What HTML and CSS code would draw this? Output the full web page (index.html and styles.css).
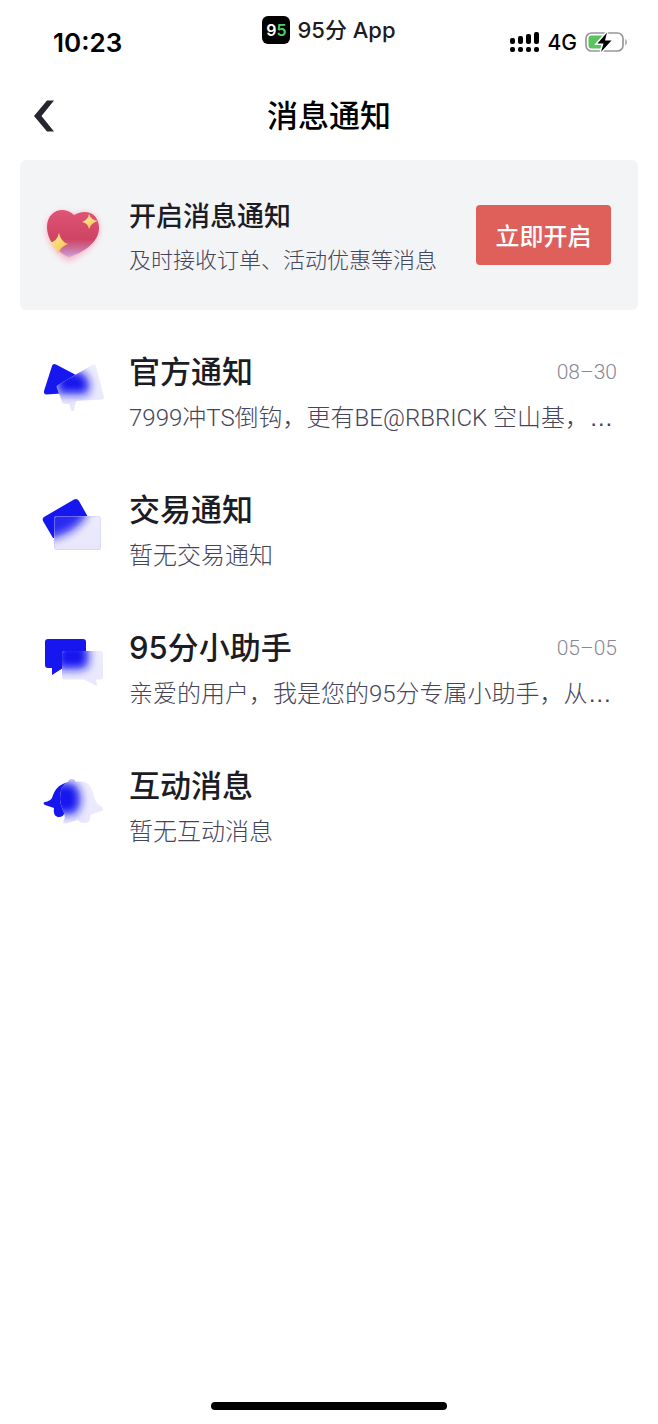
FILE: index.html
```html
<!DOCTYPE html>
<html lang="zh-CN">
  <head>
    <meta charset="UTF-8" />
    <meta name="viewport" content="width=device-width, initial-scale=1.0" />
    <title>消息通知</title>
    <link rel="stylesheet" href="styles.css">
  </head>
  <body>
    <div class="status">
      <div class="time">10:23</div>
      <div class="app">
        <span class="logo">9<i>5</i></span>
        <span>95分 App</span>
      </div>
      <div class="signals">
        <svg width="31" height="22" viewBox="0 0 31 22">
          <rect x="1" y="7" width="5" height="6" rx="2" />
          <rect x="9" y="5" width="5" height="8" rx="2" />
          <rect x="17" y="3" width="5" height="10" rx="2" />
          <rect x="25" y="1" width="5" height="12" rx="2" />
          <rect x="1" y="16" width="5" height="5" rx="2" />
          <rect x="9" y="16" width="5" height="5" rx="2" />
          <rect x="17" y="16" width="5" height="5" rx="2" />
          <rect x="25" y="16" width="5" height="5" rx="2" />
        </svg>
        <span>4G</span>
        <svg width="43" height="22" viewBox="0 0 43 22">
          <rect x="1" y="2" width="37" height="18" rx="5.5" fill="#fff" stroke="#98989b" stroke-width="1.7" />
          <path d="M40.3 8v6.4c2-1 2-5.400 0-6.400z" fill="#98989b" />
          <path d="M6.500 4.500H19v13H6.500a3 3 0 0 1-3-3v-7a3 3 0 0 1 3-3z" fill="#5bc45f" />
          <path d="M22 1.500L12.500 12.500h6L16 21l10.500-11.500h-6.500z" fill="#000" stroke="#fff" stroke-width="3" paint-order="stroke" />
        </svg>
      </div>
    </div>

    <header class="nav">
      <button class="back" aria-label="返回">
        <svg width="20" height="32" viewBox="0 0 20 32">
          <path d="M13 .5h7L7.500 16 20 31.500h-7L0 16z" fill="#26262f" />
        </svg>
      </button>
      <h1>消息通知</h1>
    </header>

    <section class="banner">
      <svg class="icon" viewBox="0 0 62 62">
        <defs>
          <linearGradient id="heart" x1="0" y1="0" x2="0" y2="1">
            <stop offset="0" stop-color="#df5575" />
            <stop offset=".62" stop-color="#cf4363" />
            <stop offset=".82" stop-color="#cc6f9b" />
            <stop offset="1" stop-color="#cfa0d8" />
          </linearGradient>
          <linearGradient id="star" x1="0" y1="0" x2="1" y2="1">
            <stop offset="0" stop-color="#ffef9a" />
            <stop offset="1" stop-color="#f3c04f" />
          </linearGradient>
          <filter id="glow" x="-30%" y="-30%" width="160%" height="160%">
            <feGaussianBlur stdDeviation="3" />
          </filter>
          <filter id="soft"><feGaussianBlur stdDeviation=".5" /></filter>
        </defs>
        <path d="M26 57C18 54 4 41 4 25C4 10 20 3 31 12C43 4 56 12 56 24C56 42 36 52 26 57z" fill="#f58fa6" opacity=".65" filter="url(#glow)" />
        <path d="M26 53C17 50 4 38 4 23C4 6 21 1 31 11C43 4 56 9 56 24C56 39 39 49 26 53z" fill="url(#heart)" filter="url(#soft)" />
        <path d="M46 10Q48 16 55 17Q48 19 46 25Q45 19 39 18Q45 16 46 10z" fill="url(#star)" />
        <path d="M16 29Q18 38 25 40Q18 42 15 50Q13 42 6 39Q14 38 16 29z" fill="url(#star)" />
      </svg>
      <div class="text">
        <h2>开启消息通知</h2>
        <p>及时接收订单、活动优惠等消息</p>
      </div>
      <button class="open">立即开启</button>
    </section>

    <ul class="list">
      <li class="row">
        <svg class="icon" viewBox="0 0 62 62">
          <defs>
            <linearGradient id="glass" x1="0" y1="0" x2="0" y2="1">
              <stop offset="0" stop-color="#f1f0fd" />
              <stop offset="1" stop-color="#e6e5fb" />
            </linearGradient>
            <filter id="blur" x="-60%" y="-60%" width="220%" height="220%">
              <feGaussianBlur stdDeviation="5" />
            </filter>
            <clipPath id="clip1">
              <path d="M15 29L49 9Q52 7 53 10L61 41Q61 43 59 43.500L33 45 31 54Q30 56 28 54L26 48H22Q20 48 19 46L14 32Q13 30 15 29z" />
            </clipPath>
          </defs>
          <path d="M9 10Q10 7 13 8.500L33 19 40 36 3 38.500Q.500 38 1 35z" fill="#1616ee" />
          <g clip-path="url(#clip1)">
            <rect width="62" height="62" fill="url(#glass)" />
            <path d="M14 14L38 16Q50 24 44 38L14 38z" fill="#1616ee" filter="url(#blur)" />
          </g>
        </svg>
        <div class="text">
          <div class="head"><h3>官方通知</h3><time>08–30</time></div>
          <p>7999冲TS倒钩，更有BE@RBRICK 空山基，<span class="dots">…</span></p>
        </div>
      </li>
      <li class="row">
        <svg class="icon" viewBox="0 0 62 62">
          <defs>
            <clipPath id="clip2"><rect x="11" y="22" width="47" height="34" rx="2.500" /></clipPath>
          </defs>
          <path d="M1 23L31 5.500Q34 4 36 7L45 23 38 42 10 44 0 27Q-1 24 1 23z" fill="#1616ee" />
          <g clip-path="url(#clip2)">
            <rect width="62" height="62" fill="url(#glass)" />
            <path d="M-8 4H48L41 26 28 37 12 44H-8z" fill="#1616ee" opacity=".9" filter="url(#blur)" />
          </g>
          <rect x="11.500" y="22.500" width="46" height="33" rx="2.500" fill="none" stroke="#c4c3fa" stroke-opacity=".4" />
        </svg>
        <div class="text">
          <div class="head"><h3>交易通知</h3></div>
          <p>暂无交易通知</p>
        </div>
      </li>
      <li class="row">
        <svg class="icon" viewBox="0 0 62 62">
          <defs>
            <clipPath id="clip3">
              <path d="M22 19H57Q60 19 60 22V45Q60 47 57 47.500H53L54 54 41 47.500H22Q19 47 19 45V22Q19 19 22 19z" />
            </clipPath>
          </defs>
          <path d="M5 7H40Q43 7 43 10V36H20L9 43V36H5Q2 36 2 33V10Q2 7 5 7z" fill="#1616ee" />
          <g clip-path="url(#clip3)">
            <rect width="62" height="62" fill="url(#glass)" />
            <path d="M14 12H45V34L38 37H14z" fill="#1616ee" filter="url(#blur)" />
          </g>
        </svg>
        <div class="text">
          <div class="head"><h3>95分小助手</h3><time>05–05</time></div>
          <p>亲爱的用户，我是您的95分专属小助手，从<span class="dots">…</span></p>
        </div>
      </li>
      <li class="row">
        <svg class="icon" viewBox="0 0 62 62">
          <defs>
            <clipPath id="clip4">
              <path d="M25 12Q26 9 29 9Q32 9 33 12C43 10 48 15 50 22C52 30 53 34 59 37Q62 40 58 41L47 45C48 51 45 53 41 53Q37 53 35 50L23 53.500Q19 54 21 50C24 45 17 37 17 29Q17 15 25 12z" />
            </clipPath>
          </defs>
          <path d="M28 12C16 13 12 19 9 28Q7 31 2 32Q-1 33 2 35L11 38C10 45 13 47 16 47Q20 47 21 44L34 42V14z" fill="#1616ee" />
          <g clip-path="url(#clip4)">
            <rect width="62" height="62" fill="url(#glass)" />
            <path d="M8 13H31Q43 28 32 44H10z" fill="#1616ee" filter="url(#blur)" />
          </g>
        </svg>
        <div class="text">
          <div class="head"><h3>互动消息</h3></div>
          <p>暂无互动消息</p>
        </div>
      </li>
    </ul>

    <div class="home"></div>
  </body>
</html>
```
FILE: styles.css
```css
* {
  box-sizing: border-box;
}
body {
  margin: 0;
  min-height: 100vh;
  display: flex;
  flex-direction: column;
  background: #fff;
  color: #1c1c24;
  font-family: Inter, "Noto Sans CJK SC", sans-serif;
}
h1, h2, h3, p, ul {
  margin: 0;
  padding: 0;
}
button {
  border: none;
  padding: 0;
  font-family: inherit;
  cursor: pointer;
}
.status {
  height: 84px;
  padding: 0 30px 0 53px;
  display: flex;
  align-items: center;
  justify-content: space-between;
  color: #000;
}
.time {
  flex: 1;
  font-size: 26px;
  font-weight: 600;
}
.app {
  display: flex;
  align-items: center;
  align-self: flex-start;
  gap: 7px;
  height: 28px;
  margin-top: 16px;
  margin-right: 23px;
  font-size: 22px;
  font-weight: 500;
  line-height: 24px;
  color: #1c1c24;
}
.logo {
  width: 28px;
  height: 28px;
  border-radius: 6px;
  background: #000;
  color: #fff;
  font-size: 16px;
  font-weight: 600;
  line-height: 28px;
  text-align: center;
}
.logo i {
  font-style: normal;
  color: #4fd065;
}
.signals {
  flex: 1;
  display: flex;
  align-items: center;
  justify-content: flex-end;
  gap: 8px;
  font-size: 21px;
  font-weight: 500;
}
.nav {
  height: 64px;
  padding: 0 34px;
  display: grid;
  grid-template-columns: 1fr auto 1fr;
  align-items: center;
}
.back {
  justify-self: start;
  display: flex;
  background: none;
}
h1 {
  font-size: 31px;
  font-weight: 500;
  line-height: 44px;
  color: #000;
}
.banner {
  min-height: 150px;
  margin: 12px 20px 16px;
  padding: 0 27px 0 23px;
  display: flex;
  align-items: center;
  border-radius: 6px;
  background: #f3f4f6;
}
.icon {
  flex: none;
  width: 62px;
  height: 62px;
  margin-right: 24px;
  overflow: visible;
}
.text {
  flex: 1;
  min-width: 0;
}
.banner .text {
  padding-top: 8px;
}
h2 {
  font-size: 27px;
  font-weight: 500;
  line-height: 44px;
}
p {
  font-family: Roboto, "Noto Sans CJK SC", sans-serif;
  font-size: 24px;
  font-weight: 300;
  line-height: 48px;
  color: #45455a;
  white-space: nowrap;
}
.banner p {
  font-size: 22px;
  line-height: 44px;
}
.dots {
  font-family: "Liberation Sans", sans-serif;
}
.open {
  width: 135px;
  height: 60px;
  padding-bottom: 2px;
  border-radius: 4px;
  background: #df5f5b;
  color: #fff;
  font-size: 24px;
  font-weight: 500;
}
.list {
  list-style: none;
}
.row {
  display: flex;
  padding: 24px 41px 22px 43px;
}
.row .icon {
  margin-top: 6px;
}
.head {
  display: flex;
  align-items: center;
  justify-content: space-between;
}
h3 {
  font-size: 31px;
  font-weight: 500;
  line-height: 44px;
}
time {
  font-family: Roboto, sans-serif;
  font-size: 21px;
  font-weight: 300;
  color: #888893;
}
.home {
  width: 36%;
  height: 8px;
  margin: auto auto 14px;
  border-radius: 4px;
  background: #000;
}
```
